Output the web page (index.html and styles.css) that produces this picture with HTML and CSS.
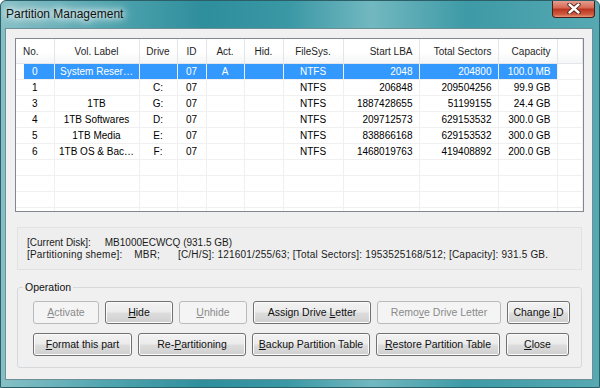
FILE: index.html
```html
<!DOCTYPE html>
<html lang="en">
<head>
    <meta charset="UTF-8">
    <meta name="viewport" content="width=device-width, initial-scale=1.0">
    <title>Partition Management</title>
    <link rel="stylesheet" href="styles.css">
</head>
<body>
<div class="window">
    <div class="titlebar">
        <span class="title">Partition Management</span>
        <div class="close-btn">
            <svg width="14" height="11" viewBox="0 0 14 11">
                <path d="M2.5 1.5 L11.5 9.5 M11.5 1.5 L2.5 9.5" stroke="#4a1a14" stroke-width="4.2" stroke-linecap="round"/>
                <path d="M2.5 1.5 L11.5 9.5 M11.5 1.5 L2.5 9.5" stroke="#fff" stroke-width="2.4" stroke-linecap="round"/>
            </svg>
        </div>
    </div>
    <div class="client">
        <div class="listview">
            <table class="parts">
                <colgroup>
                    <col style="width:38px"><col style="width:85px"><col style="width:38px"><col style="width:29px">
                    <col style="width:38px"><col style="width:39px"><col style="width:60px"><col style="width:76px">
                    <col style="width:79px"><col style="width:59px"><col>
                </colgroup>
                <thead>
                    <tr>
                        <th class="left">No.</th>
                        <th>Vol. Label</th>
                        <th>Drive</th>
                        <th>ID</th>
                        <th>Act.</th>
                        <th>Hid.</th>
                        <th>FileSys.</th>
                        <th class="num">Start LBA</th>
                        <th class="num">Total Sectors</th>
                        <th class="num">Capacity</th>
                        <th></th>
                    </tr>
                </thead>
                <tbody>
                    <tr class="selected">
                        <td class="first">0</td><td>System Reser…</td><td></td><td>07</td><td>A</td><td></td><td>NTFS</td>
                        <td class="num">2048</td><td class="num">204800</td><td class="num">100.0 MB</td><td class="filler"></td>
                    </tr>
                    <tr>
                        <td>1</td><td></td><td>C:</td><td>07</td><td></td><td></td><td>NTFS</td>
                        <td class="num">206848</td><td class="num">209504256</td><td class="num">99.9 GB</td><td></td>
                    </tr>
                    <tr>
                        <td>3</td><td>1TB</td><td>G:</td><td>07</td><td></td><td></td><td>NTFS</td>
                        <td class="num">1887428655</td><td class="num">51199155</td><td class="num">24.4 GB</td><td></td>
                    </tr>
                    <tr>
                        <td>4</td><td>1TB Softwares</td><td>D:</td><td>07</td><td></td><td></td><td>NTFS</td>
                        <td class="num">209712573</td><td class="num">629153532</td><td class="num">300.0 GB</td><td></td>
                    </tr>
                    <tr>
                        <td>5</td><td>1TB Media</td><td>E:</td><td>07</td><td></td><td></td><td>NTFS</td>
                        <td class="num">838866168</td><td class="num">629153532</td><td class="num">300.0 GB</td><td></td>
                    </tr>
                    <tr>
                        <td>6</td><td>1TB OS &amp; Bac…</td><td>F:</td><td>07</td><td></td><td></td><td>NTFS</td>
                        <td class="num">1468019763</td><td class="num">419408892</td><td class="num">200.0 GB</td><td></td>
                    </tr>
                    <tr class="empty"><td></td><td></td><td></td><td></td><td></td><td></td><td></td><td></td><td></td><td></td><td></td></tr>
                    <tr class="empty"><td></td><td></td><td></td><td></td><td></td><td></td><td></td><td></td><td></td><td></td><td></td></tr>
                    <tr class="empty"><td></td><td></td><td></td><td></td><td></td><td></td><td></td><td></td><td></td><td></td><td></td></tr>
                    <tr class="empty"><td></td><td></td><td></td><td></td><td></td><td></td><td></td><td></td><td></td><td></td><td></td></tr>
                </tbody>
            </table>
        </div>

        <div class="disk-info">
            <div class="info-line">[Current Disk]:     MB1000ECWCQ (931.5 GB)</div>
            <div class="info-line wide">[Partitioning sheme]:    MBR;      [C/H/S]: 121601/255/63; [Total Sectors]: 1953525168/512; [Capacity]: 931.5 GB.</div>
        </div>

        <fieldset class="operation">
            <legend>Operation</legend>
            <div class="btn-row row-top">
                <div class="btn disabled"><u>A</u>ctivate</div>
                <div class="btn"><u>H</u>ide</div>
                <div class="btn disabled"><u>U</u>nhide</div>
                <div class="btn">Assign Drive <u>L</u>etter</div>
                <div class="btn disabled">Remo<u>v</u>e Drive Letter</div>
                <div class="btn">Change <u>I</u>D</div>
            </div>
            <div class="btn-row row-bottom">
                <div class="btn"><u>F</u>ormat this part</div>
                <div class="btn">Re-<u>P</u>artitioning</div>
                <div class="btn"><u>B</u>ackup Partition Table</div>
                <div class="btn"><u>R</u>estore Partition Table</div>
                <div class="btn"><u>C</u>lose</div>
            </div>
        </fieldset>
    </div>
</div>
</body>
</html>
```

FILE: styles.css
```css
* {
    box-sizing: border-box;
}
body {
    margin: 0;
    background-color: #fff;
    font-family: 'Liberation Sans', Arial, sans-serif;
    color: #000;
}
.window {
    width: 600px;
    height: 388px;
    border: 1px solid #2b5e66;
    border-radius: 6px 6px 0 0;
    background: linear-gradient(to right, #86c0c6 0%, #4fa4af 18%, #2f8e9c 34%, #3a98a5 48%, #72b8c0 62%, #3d9aa6 78%, #56a9b3 100%);
    overflow: hidden;
}
.titlebar {
    display: flex;
    align-items: flex-start;
    height: 27px;
    padding-left: 5px;
}
.title {
    margin-top: 6px;
    font-size: 12px;
    color: #111;
    text-shadow: 0 0 6px #fff, 0 0 10px #fff, 0 0 14px #fff;
}
.close-btn {
    display: flex;
    align-items: center;
    justify-content: center;
    margin-left: auto;
    margin-right: 4px;
    margin-top: -1px;
    width: 43px;
    height: 18px;
    border: 1px solid #4a1d17;
    border-top: none;
    border-radius: 0 0 4px 4px;
    background: linear-gradient(#e9a597 0%, #d66a55 45%, #b93620 55%, #cf5a3f 85%, #e49a7d 100%);
}
.client {
    margin: 0 6px 0 4px;
    height: 352px;
    border: 1px solid #6f8f96;
    background-color: #f0f0f0;
    padding: 9px 0 0 9px;
}
.listview {
    width: 569px;
    height: 174px;
    border: 1px solid #828790;
    background-color: #fff;
    overflow: hidden;
}
.parts {
    border-collapse: collapse;
    table-layout: fixed;
    width: 567px;
    font-size: 10px;
}
.parts th {
    height: 24px;
    padding: 2px 4px 0;
    font-weight: normal;
    text-align: center;
    white-space: nowrap;
    color: #1e1e1e;
    border-right: 1px solid #e3e5e8;
    border-bottom: 1px solid #e3e5e8;
    background: linear-gradient(#fff 0%, #fff 55%, #f4f5f7 100%);
}
.parts th.left {
    text-align: left;
    padding-left: 7px;
}
.parts td {
    height: 16px;
    padding: 0 4px;
    text-align: center;
    white-space: nowrap;
    overflow: hidden;
    border-right: 1px solid #f0f0f0;
    border-bottom: 1px solid #f0f0f0;
}
.parts .num {
    text-align: right;
    padding-right: 6px;
}
.parts tr.selected td {
    background-color: #3399ff;
    color: #fff;
}
.parts tr.selected td.first {
    background: linear-gradient(to right, #fff 8px, #3399ff 8px);
}
.parts tr.selected td.filler {
    background: #fff;
}
.disk-info {
    width: 565px;
    height: 43px;
    margin: 15px 0 0 2px;
    padding: 9px 0 0 9px;
    border: 1px solid #e2e2e2;
    background-color: #eeeeee;
    font-size: 10px;
    line-height: 12px;
    color: #1a1a1a;
}
.info-line {
    white-space: pre;
}
.info-line.wide {
    letter-spacing: 0.2px;
}
.operation {
    width: 565px;
    height: 87px;
    margin: 11px 0 0 2px;
    padding: 0 0 0 5px;
    border: 1px solid #d5d9dc;
    border-radius: 3px;
}
.operation legend {
    padding: 0 2px;
    font-size: 10.5px;
    line-height: 13px;
    color: #111;
}
.btn-row {
    display: grid;
    column-gap: 6px;
    margin-left: 10px;
}
.row-top {
    grid-template-columns: 66px 68px 68px 118px 124px 63px;
    margin-top: 7px;
}
.row-bottom {
    grid-template-columns: 99px 108px 118px 124px 63px;
    margin-top: 9px;
}
.btn {
    height: 23px;
    line-height: 21px;
    text-align: center;
    font-size: 10.5px;
    color: #111;
    border: 1px solid #707070;
    border-radius: 3px;
    background: linear-gradient(#f2f2f2 0%, #ebebeb 48%, #dddddd 52%, #cfcfcf 100%);
    box-shadow: inset 0 0 0 1px #fcfcfc;
    white-space: nowrap;
}
.btn.disabled {
    color: #8a8a8a;
    border-color: #b8bcbf;
    background: #f4f4f4;
    box-shadow: none;
}
```
